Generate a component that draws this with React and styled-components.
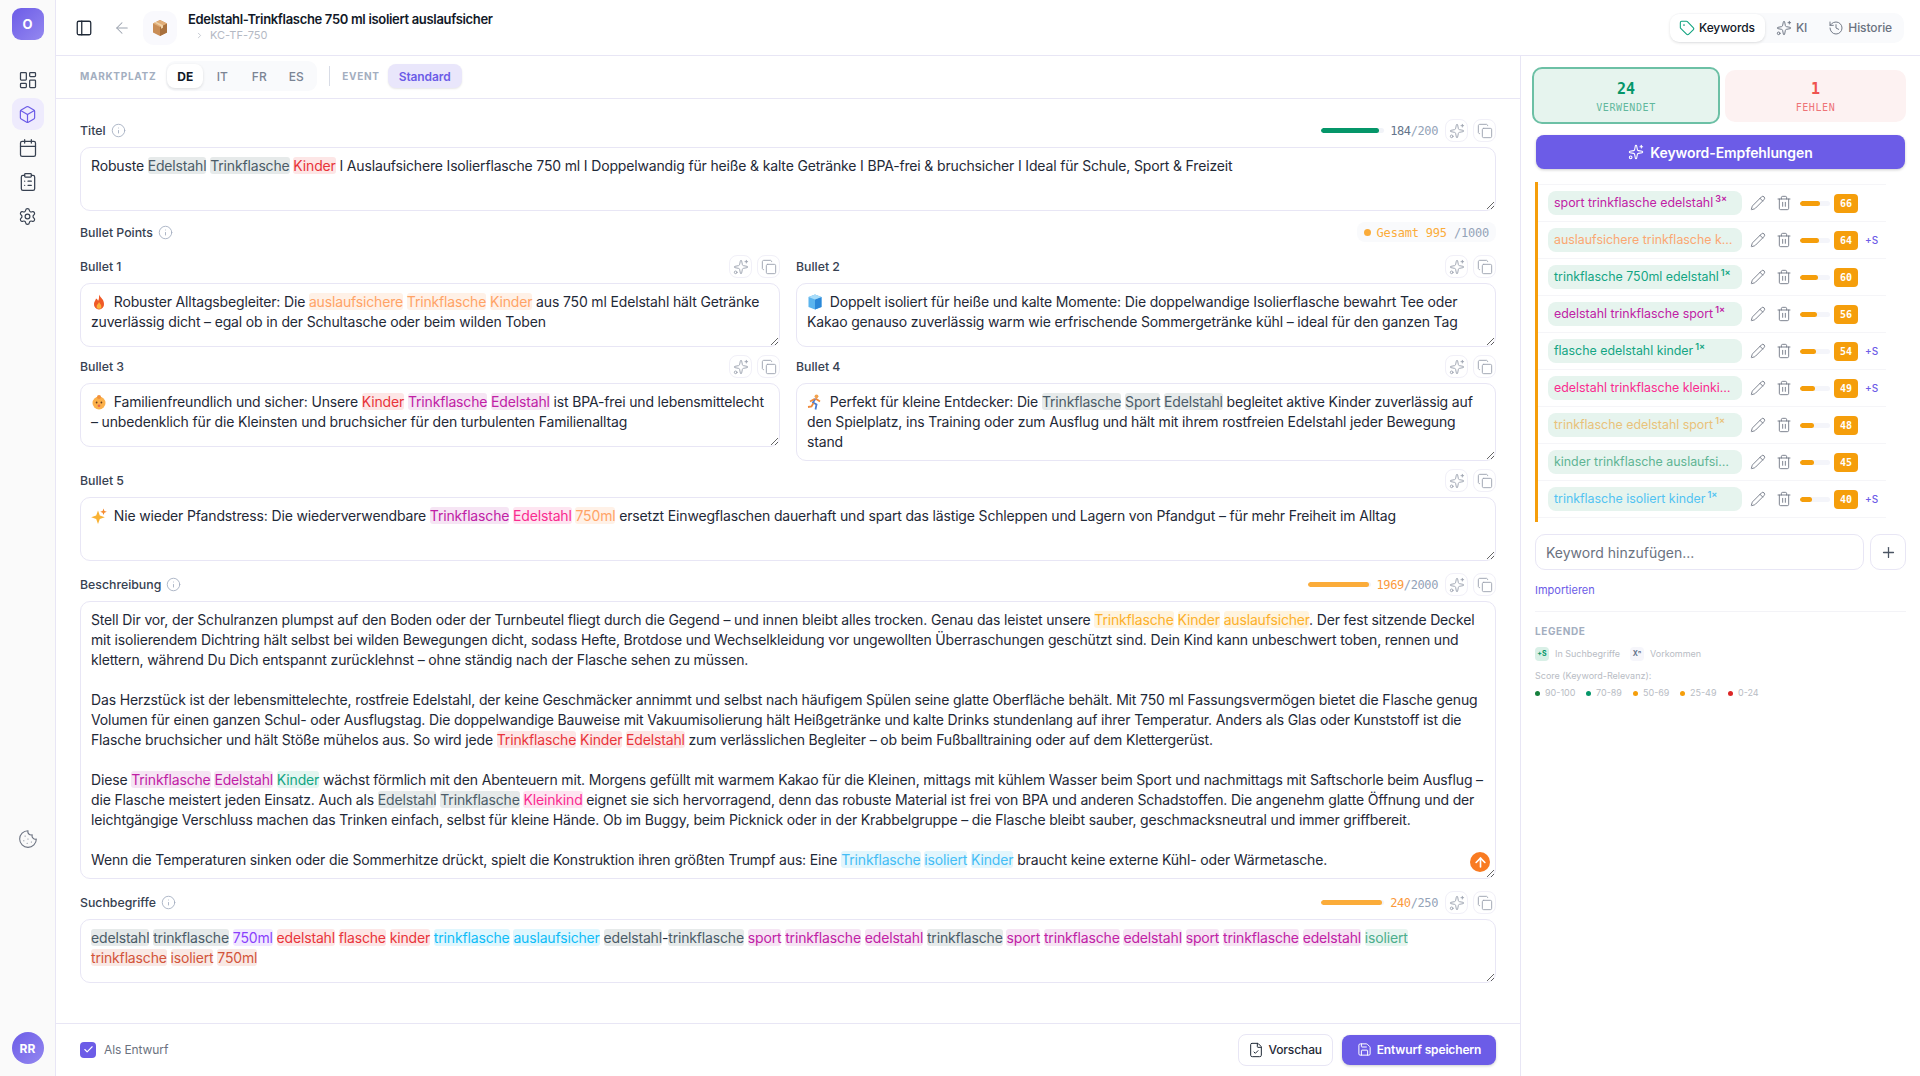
import React from 'react'
import styled, { createGlobalStyle } from 'styled-components'
import {
    ArrowLeft, ArrowUp, Box, Calendar, Check, ChevronRight, ClipboardList, Cookie, Copy, FileCheck,
    History, Info, LayoutDashboard, PanelLeft, Pencil, Plus, Save, Settings, Sparkles, Tag, Trash2,
} from 'lucide-react'

const MONO = '"DejaVu Sans Mono", "Liberation Mono", monospace'
const PURPLE = '#6c5ce7'
const LINE = '#e8e6f5'

const TONES = {
    gray: ['#4b5c68', '#e6eaea'],
    red: ['#e8343a', '#fde6e6'],
    orange: ['#ffa366', '#fff1e7'],
    magenta: ['#c021a5', '#f6e5f4'],
    teal: ['#13a583', '#e4f6f0'],
    pink: ['#f92b8f', '#fee5f1'],
    yellow: ['#fcb02a', '#fff4df'],
    blue: ['#45bdf5', '#e3f6fd'],
    cyan: ['#0fbcf7', '#e0f7fe'],
    purple: ['#8a3ffc', '#f1e9ff'],
    brick: ['#d2543a', '#f9e9e5'],
    sage: ['#4cae8c', '#e8f5f0'],
}

const GlobalStyle = createGlobalStyle`
    html, body {
        margin: 0;
        padding: 0;
        background: #fff;
        font-family: Inter, "Noto Sans", sans-serif;
        color: #1f2937;
    }
    * { box-sizing: border-box; }
`

const Shell = styled.div`
    display: flex;
    height: 100vh;
    overflow: hidden;
`

const Sidebar = styled.nav`
    width: 56px;
    flex: none;
    display: flex;
    flex-direction: column;
    align-items: center;
    padding: 8px 0 12px;
    background: #fafafa;
    border-right: 1px solid ${LINE};
`

const Logo = styled.div`
    width: 32px;
    height: 32px;
    margin-bottom: 24px;
    border-radius: 9px;
    display: flex;
    align-items: center;
    justify-content: center;
    background: linear-gradient(135deg, #6c5ce7, #9488f0);
    color: #fff;
    font-size: 13px;
    font-weight: 700;
`

const NavItem = styled.div`
    width: 32px;
    height: 32px;
    margin-bottom: 2px;
    border-radius: 9px;
    display: flex;
    align-items: center;
    justify-content: center;
    background: ${({ $active }) => ($active ? '#eeebfd' : 'transparent')};
    color: ${({ $active }) => ($active ? PURPLE : '#374151')};
`

const CookieSlot = styled.div`
    margin-top: auto;
    height: 20px;
    margin-bottom: 183px;
    color: #6b7280;
`

const Avatar = styled(Logo)`
    border-radius: 50%;
    margin: 0;
    font-size: 12px;
`

const Column = styled.div`
    flex: 1;
    min-width: 0;
    display: flex;
    flex-direction: column;
`

const Header = styled.header`
    height: 56px;
    flex: none;
    display: flex;
    align-items: center;
    padding: 0 16px 0 19px;
    border-bottom: 1px solid ${LINE};
`

const BackLink = styled.div`
    display: flex;
    margin: 0 12px 0 20px;
    color: #9ca3af;
`

const Thumb = styled.div`
    width: 34px;
    height: 34px;
    margin-right: 11px;
    border-radius: 11px;
    background: #f9f9fd;
    display: flex;
    align-items: center;
    justify-content: center;
`

const TitleBlock = styled.div`
    flex: 1;
    display: flex;
    flex-direction: column;
    gap: 1px;
    margin-top: -2px;
`

const PageTitle = styled.div`
    font-size: 13px;
    line-height: 16px;
    font-weight: 600;
    letter-spacing: -0.32px;
    color: #111827;
`

const Sku = styled.div`
    display: flex;
    align-items: center;
    gap: 6px;
    padding-left: 7px;
    font-size: 11px;
    line-height: 14px;
    color: #b4b9c4;
`

const ViewTabs = styled.div`
    display: flex;
    gap: 2px;
    padding: 1px 2px 1px 0;
    background: #f9fafc;
    border-radius: 10px;
`

const ViewTab = styled.div`
    height: 28px;
    padding: 0 10px 0 9px;
    display: flex;
    align-items: center;
    gap: 4px;
    border-radius: 9px;
    font-size: 12px;
    font-weight: 500;
    letter-spacing: -0.1px;
    background: ${({ $active }) => ($active ? '#fff' : 'transparent')};
    color: ${({ $active }) => ($active ? '#111827' : '#6b7280')};
    box-shadow: ${({ $active }) => ($active ? '0 1px 3px rgba(0,0,0,.12)' : 'none')};
`

const Body = styled.div`
    flex: 1;
    min-height: 0;
    display: flex;
`

const Main = styled.main`
    width: 1465px;
    flex: none;
    display: flex;
    flex-direction: column;
    border-right: 1px solid ${LINE};
`

const TabBar = styled.div`
    height: 43px;
    flex: none;
    display: flex;
    align-items: center;
    padding: 0 24px 2px;
    border-bottom: 1px solid ${LINE};
`

const BarLabel = styled.span`
    font-size: 10px;
    font-weight: 700;
    letter-spacing: 0.7px;
    color: #a3aec0;
`

const Segment = styled.div`
    display: flex;
    gap: 1px;
    margin-left: 10px;
    padding: 3px 3px 3px 1px;
    border-radius: 9px;
    background: #f9fafc;
`

const SegmentItem = styled.div`
    width: 36px;
    height: 24px;
    display: flex;
    align-items: center;
    justify-content: center;
    border-radius: 8px;
    font-size: 12px;
    font-weight: ${({ $active }) => ($active ? 700 : 500)};
    background: ${({ $active }) => ($active ? '#fff' : 'transparent')};
    color: ${({ $active }) => ($active ? '#111827' : '#7b8494')};
    box-shadow: ${({ $active }) => ($active ? '0 1px 3px rgba(0,0,0,.12)' : 'none')};
`

const BarDivider = styled.div`
    width: 1px;
    height: 20px;
    margin: 0 12px;
    background: #d8dce6;
`

const EventPill = styled.div`
    height: 24px;
    margin-left: 8px;
    padding: 0 11px;
    display: flex;
    align-items: center;
    border-radius: 8px;
    font-size: 12px;
    font-weight: 600;
    letter-spacing: -0.1px;
    background: #e9e6fb;
    color: ${PURPLE};
    box-shadow: 0 1px 2px rgba(0,0,0,.1);
`

const Scroll = styled.div`
    flex: 1;
    min-height: 0;
    padding: 20px 24px 0;
    overflow: hidden;
`

const Field = styled.section`
    margin-bottom: ${({ $gap }) => $gap ?? 12}px;
`

const FieldHead = styled.div`
    height: 23px;
    margin-bottom: 5px;
    display: flex;
    align-items: center;
    justify-content: space-between;
`

const Label = styled.div`
    display: flex;
    align-items: center;
    gap: 5px;
    font-size: 12.3px;
    font-weight: 500;
    color: #374151;
    svg { color: #a3aec0; }
`

const Tools = styled.div`
    display: flex;
    align-items: center;
    gap: 5px;
`

const ToolButton = styled.button`
    width: 23px;
    height: 23px;
    padding: 0;
    display: flex;
    align-items: center;
    justify-content: center;
    border: 1px solid #f1f0f8;
    border-radius: 8px;
    background: #fff;
    color: #9ca3af;
`

const Meter = styled.div`
    width: 63px;
    height: 5px;
    margin-right: 1px;
    border-radius: 3px;
    background: #f1f3f8;
    overflow: hidden;
`

const MeterFill = styled.div`
    height: 100%;
    width: ${({ $value }) => $value}%;
    border-radius: 3px;
    background: ${({ $color }) => $color};
`

const Count = styled.div`
    margin-right: 2px;
    font-family: ${MONO};
    font-size: 12px;
    letter-spacing: -0.4px;
    color: #94a3b8;
`

const CountValue = styled.span`
    color: ${({ $color }) => $color};
`

const TextBox = styled.div`
    position: relative;
    min-height: 64px;
    padding: 8px 10px;
    border: 1px solid ${LINE};
    border-radius: 10px;
    background: #fff;
    font-size: 14px;
    line-height: 20px;
    letter-spacing: -0.16px;
    color: #1f2937;
    white-space: pre-wrap;
    resize: vertical;
    overflow: hidden;
`

const Mark = styled.span`
    border-radius: 3px;
    color: ${({ $tone }) => TONES[$tone][0]};
    background: ${({ $tone }) => TONES[$tone][1]};
`

const EmojiSlot = styled.svg`
    display: inline-block;
    width: 16px;
    height: 16px;
    margin-right: 3px;
    vertical-align: -3px;
`

const SectionHead = styled.div`
    height: 20px;
    margin-bottom: 13px;
    display: flex;
    align-items: center;
    justify-content: space-between;
`

const TotalPill = styled.div`
    height: 20px;
    padding: 1px 7px 0;
    display: flex;
    align-items: center;
    gap: 6px;
    border-radius: 8px;
    background: #f9fafc;
    font-family: ${MONO};
    font-size: 12px;
    letter-spacing: -0.2px;
    color: #fbac3a;
    white-space: pre;
`

const TotalMax = styled.span`
    color: #94a3b8;
`

const Dot = styled.span`
    width: ${({ $size }) => $size || 5}px;
    height: ${({ $size }) => $size || 5}px;
    flex: none;
    border-radius: 50%;
    background: ${({ $color }) => $color};
`

const BulletGrid = styled.div`
    display: grid;
    grid-template-columns: 700px 700px;
    column-gap: 16px;
    row-gap: 8px;
    align-items: start;
    margin-bottom: 8px;
`

const ScrollTop = styled.div`
    position: absolute;
    right: 5px;
    bottom: 6px;
    width: 20px;
    height: 20px;
    border-radius: 50%;
    background: #f97b22;
    color: #fff;
    display: flex;
    align-items: center;
    justify-content: center;
`

const Footer = styled.footer`
    height: 53px;
    flex: none;
    display: flex;
    align-items: center;
    padding: 0 24px 1px;
    border-top: 1px solid ${LINE};
`

const DraftToggle = styled.label`
    display: flex;
    align-items: center;
    gap: 8px;
    font-size: 12px;
    letter-spacing: -0.1px;
    color: #6b7280;
`

const CheckMark = styled.span`
    width: 16px;
    height: 16px;
    border-radius: 4px;
    background: ${PURPLE};
    color: #fff;
    display: flex;
    align-items: center;
    justify-content: center;
`

const FooterActions = styled.div`
    margin-left: auto;
    display: flex;
    align-items: center;
    gap: 9px;
`

const GhostButton = styled.button`
    height: 32px;
    padding: 0 10px 0 9px;
    display: flex;
    align-items: center;
    gap: 4px;
    border: 1px solid ${LINE};
    border-radius: 8px;
    background: #fff;
    color: #1f2937;
    font: 500 12px Inter, sans-serif;
    letter-spacing: -0.1px;
`

const SaveButton = styled.button`
    height: 30px;
    width: 154px;
    display: flex;
    align-items: center;
    justify-content: center;
    gap: 5px;
    border: 0;
    border-radius: 8px;
    background: ${PURPLE};
    color: #fff;
    font: 600 12px Inter, sans-serif;
    letter-spacing: -0.15px;
    box-shadow: 0 1px 3px rgba(0,0,0,.2);
`

const Panel = styled.aside`
    flex: 1;
    min-width: 0;
    padding: 11px 14px 0;
`

const Stats = styled.div`
    display: grid;
    grid-template-columns: 188px 181px;
    column-gap: 5px;
    align-items: center;
    margin-left: -3px;
`

const Stat = styled.div`
    height: ${({ $active }) => ($active ? 57 : 52)}px;
    padding-top: 2px;
    border: ${({ $active }) => ($active ? '2px solid #6cc0a5' : '0')};
    border-radius: 10px;
    background: ${({ $bg }) => $bg};
    display: flex;
    flex-direction: column;
    align-items: center;
    justify-content: center;
    gap: 4px;
    font-family: ${MONO};
`

const StatValue = styled.div`
    font-size: 15px;
    line-height: 18px;
    font-weight: 700;
    color: ${({ $color }) => $color};
`

const StatLabel = styled.div`
    font-size: 10px;
    line-height: 12px;
    letter-spacing: 0.6px;
    color: ${({ $color }) => $color};
`

const PrimaryButton = styled.button`
    width: 369px;
    height: 34px;
    margin: 11px 0 13px 1px;
    display: flex;
    align-items: center;
    justify-content: center;
    gap: 6px;
    border: 0;
    border-radius: 8px;
    background: ${PURPLE};
    color: #fff;
    font: 600 14px Inter, sans-serif;
    letter-spacing: -0.1px;
    box-shadow: 0 1px 3px rgba(0,0,0,.2);
`

const KeywordList = styled.div`
    width: 351px;
    padding: 2px 0 4px;
    border-left: 3px solid #f59e0b;
`

const KeywordRow = styled.div`
    height: 37px;
    padding-left: 10px;
    display: flex;
    align-items: center;
    border-top: 1px solid #f5f5f8;
    color: #6b7280;
    &:last-child { height: 38px; border-bottom: 1px solid #f5f5f8; }
`

const Chip = styled.div`
    width: 194px;
    height: 24px;
    flex: none;
    padding: 0 8px 0 6px;
    border-radius: 8px;
    background: #e6f4ee;
    font-size: 12.4px;
    line-height: 24px;
    color: ${({ $tone }) => $tone};
    white-space: nowrap;
    overflow: hidden;
    text-overflow: ellipsis;
`

const Times = styled.sup`
    margin-left: 2px;
    font-size: 9px;
    line-height: 0;
    font-weight: 600;
`

const RowAction = styled.span`
    display: flex;
    margin-left: ${({ $gap }) => $gap}px;
`

const ScoreTrack = styled.div`
    width: 30px;
    height: 5px;
    margin-left: 8px;
    border-radius: 3px;
    background: #f4f5fa;
    overflow: hidden;
`

const ScoreFill = styled.div`
    height: 100%;
    width: ${({ $value }) => $value}%;
    border-radius: 3px;
    background: #f59e0b;
`

const ScoreBadge = styled.div`
    width: 24px;
    height: 19px;
    margin-left: 4px;
    border-radius: 4px;
    background: #f59e0b;
    color: #fff;
    display: flex;
    align-items: center;
    justify-content: center;
    font-family: ${MONO};
    font-size: 10px;
    font-weight: 700;
`

const SearchFlag = styled.span`
    margin-left: 7px;
    font-size: 10px;
    font-weight: 500;
    color: ${PURPLE};
`

const AddRow = styled.div`
    margin-top: 12px;
    display: flex;
    gap: 6px;
`

const AddInput = styled.div`
    flex: 1;
    height: 36px;
    padding: 0 10px;
    display: flex;
    align-items: center;
    border: 1px solid ${LINE};
    border-radius: 10px;
    font-size: 14px;
    color: #6b7280;
`

const AddButton = styled.div`
    width: 36px;
    height: 36px;
    display: flex;
    align-items: center;
    justify-content: center;
    border: 1px solid ${LINE};
    border-radius: 10px;
    color: #4b5563;
`

const ImportLink = styled.div`
    margin-top: 13px;
    font-size: 11px;
    line-height: 14px;
    color: ${PURPLE};
`

const Legend = styled.div`
    margin-top: 14px;
    padding-top: 13px;
    border-top: 1px solid #f3f3f7;
`

const LegendTitle = styled.div`
    font-size: 10px;
    line-height: 12px;
    font-weight: 700;
    letter-spacing: 0.6px;
    color: #a3aec0;
`

const LegendRow = styled.div`
    display: flex;
    align-items: center;
    margin-top: ${({ $top }) => $top}px;
    font-size: 9px;
    line-height: 12px;
    color: #b8bcc4;
`

const LegendBadge = styled.span`
    width: 14px;
    height: 14px;
    margin-right: 6px;
    border-radius: 4px;
    display: flex;
    align-items: center;
    justify-content: center;
    font-size: 7px;
    font-weight: 700;
    background: ${({ $bg }) => $bg};
    color: ${({ $color }) => $color};
`

const LegendEntry = styled.span`
    display: flex;
    align-items: center;
    gap: 5px;
    width: ${({ $width }) => $width}px;
`

const LegendItem = styled.span`
    display: flex;
    align-items: center;
    width: ${({ $width }) => $width}px;
`

const KEYWORDS = [
    { text: 'sport trinkflasche edelstahl', tone: '#c021a5', times: '3×', score: 66 },
    { text: 'auslaufsichere trinkflasche kinder', tone: '#fba772', score: 64, search: true },
    { text: 'trinkflasche 750ml edelstahl', tone: '#13a583', times: '1×', score: 60 },
    { text: 'edelstahl trinkflasche sport', tone: '#c021a5', times: '1×', score: 56 },
    { text: 'flasche edelstahl kinder', tone: '#13a583', times: '1×', score: 54, search: true },
    { text: 'edelstahl trinkflasche kleinkind', tone: '#f92b8f', score: 49, search: true },
    { text: 'trinkflasche edelstahl sport', tone: '#e9c27a', times: '1×', score: 48 },
    { text: 'kinder trinkflasche auslaufsicher', tone: '#5fb594', score: 45 },
    { text: 'trinkflasche isoliert kinder', tone: '#52c3f2', times: '1×', score: 40, search: true },
]

const SCORES = [
    ['#15803d', '90-100', 51],
    ['#059669', '70-89', 47],
    ['#f59e0b', '50-69', 47],
    ['#f59e0b', '25-49', 48],
    ['#dc2626', '0-24', 40],
]

const ParcelEmoji = () => (
    <svg width="20" height="20" viewBox="0 0 20 20">
        <path d="M10 2l7 3.5v9L10 18l-7-3.500v-9z" fill="#c98d55" />
        <path d="M10 9l7-3.500v9L10 18z" fill="#a8703d" />
        <path d="M10 2l7 3.500L10 9 3 5.500z" fill="#e0ad78" />
        <path d="M6 3.800l7 3.500v2.500l-2 1V8.200L4.500 4.600z" fill="#f0d3a8" />
    </svg>
)

const FireEmoji = () => (
    <EmojiSlot viewBox="0 0 16 16">
        <path d="M8 .5c1 3 5 4.500 5 9.500A5 5 0 0 1 8 15.500 5 5 0 0 1 3 10C3 7.500 4.500 7 5 4.500 6 5 7 6 7 7c1-1.500 1.200-4 1-6.500z" fill="#ef5a28" />
        <path d="M8 8c.5 1.500 2.300 2.300 2.300 4.200A2.300 2.300 0 0 1 8 14.800a2.300 2.300 0 0 1-2.300-2.600C5.700 10.500 7.500 10 8 8z" fill="#fbb13c" />
    </EmojiSlot>
)

const CubeEmoji = () => (
    <EmojiSlot viewBox="0 0 16 16">
        <path d="M8 .5l6.500 2.500v10L8 15.500 1.500 13V3z" fill="#5bb4ee" />
        <path d="M8 5.500L14.500 3v10L8 15.500z" fill="#2b87d8" />
        <path d="M8 .5L14.500 3 8 5.500 1.500 3z" fill="#a8dcf9" />
    </EmojiSlot>
)

const BabyEmoji = () => (
    <EmojiSlot viewBox="0 0 16 16">
        <circle cx="8" cy="9" r="6.500" fill="#fbb04a" />
        <circle cx="8" cy="3" r="2" fill="#f2913a" />
        <circle cx="5.600" cy="8.500" r=".9" fill="#6b3d1a" />
        <circle cx="10.400" cy="8.500" r=".9" fill="#6b3d1a" />
        <circle cx="8" cy="11.800" r="1.300" fill="#e8674a" />
    </EmojiSlot>
)

const RunnerEmoji = () => (
    <EmojiSlot viewBox="0 0 16 16">
        <circle cx="9.500" cy="2.300" r="1.900" fill="#f2a24e" />
        <path d="M8.500 4.500l-2.500 4 3.500 2-1 5" stroke="#4a7bd0" strokeWidth="1.800" fill="none" />
        <path d="M8.500 4.500L13 7.500M7.500 5L3 7.500M6.500 9l-2 3.500-3.500.5" stroke="#f08a3c" strokeWidth="1.800" fill="none" />
    </EmojiSlot>
)

const SparkleEmoji = () => (
    <EmojiSlot viewBox="0 0 16 16">
        <path d="M7 2.500l1.800 5 5 1.800-5 1.800L7 16l-1.800-4.900-5-1.800 5-1.800z" fill="#f9b233" />
        <path d="M12.500 .5l.9 2.400 2.400.9-2.400.9-.9 2.400-.9-2.400-2.400-.9 2.400-.9z" fill="#f58a2e" />
    </EmojiSlot>
)

const FieldTools = () => (
    <Tools>
        <ToolButton><Sparkles size={16} strokeWidth={1.4} /></ToolButton>
        <ToolButton><Copy size={16} strokeWidth={1.4} /></ToolButton>
    </Tools>
)

const CountedTools = ({ value, max, fill, color, valueColor }) => (
    <Tools>
        <Meter><MeterFill $value={fill} $color={color} /></Meter>
        <Count><CountValue $color={valueColor}>{value}</CountValue>/{max}</Count>
        <ToolButton><Sparkles size={16} strokeWidth={1.4} /></ToolButton>
        <ToolButton><Copy size={16} strokeWidth={1.4} /></ToolButton>
    </Tools>
)

const FieldLabel = ({ children }) => (
    <Label>{children}<Info size={15} strokeWidth={1.4} /></Label>
)

const App = () => {
    return (
        <Shell>
            <GlobalStyle />
            <Sidebar>
                <Logo>O</Logo>
                <NavItem><LayoutDashboard size={20} strokeWidth={1.5} /></NavItem>
                <NavItem $active><Box size={19} strokeWidth={1.5} /></NavItem>
                <NavItem><Calendar size={20} strokeWidth={1.5} /></NavItem>
                <NavItem><ClipboardList size={20} strokeWidth={1.5} /></NavItem>
                <NavItem><Settings size={19} strokeWidth={1.5} /></NavItem>
                <CookieSlot><Cookie size={20} strokeWidth={1.3} /></CookieSlot>
                <Avatar>RR</Avatar>
            </Sidebar>
            <Column>
                <Header>
                    <PanelLeft size={18} strokeWidth={1.7} />
                    <BackLink><ArrowLeft size={18} strokeWidth={1.4} /></BackLink>
                    <Thumb><ParcelEmoji /></Thumb>
                    <TitleBlock>
                        <PageTitle>Edelstahl-Trinkflasche 750 ml isoliert auslaufsicher</PageTitle>
                        <Sku><ChevronRight size={9} />KC-TF-750</Sku>
                    </TitleBlock>
                    <ViewTabs>
                        <ViewTab $active><Tag size={16} strokeWidth={1.6} color="#10a37f" />Keywords</ViewTab>
                        <ViewTab><Sparkles size={16} strokeWidth={1.4} />KI</ViewTab>
                        <ViewTab><History size={16} strokeWidth={1.4} />Historie</ViewTab>
                    </ViewTabs>
                </Header>
                <Body>
                    <Main>
                        <TabBar>
                            <BarLabel>MARKTPLATZ</BarLabel>
                            <Segment>
                                <SegmentItem $active>DE</SegmentItem>
                                <SegmentItem>IT</SegmentItem>
                                <SegmentItem>FR</SegmentItem>
                                <SegmentItem>ES</SegmentItem>
                            </Segment>
                            <BarDivider />
                            <BarLabel>EVENT</BarLabel>
                            <EventPill>Standard</EventPill>
                        </TabBar>
                        <Scroll>
                            <Field $gap={11}>
                                <FieldHead>
                                    <FieldLabel>Titel</FieldLabel>
                                    <CountedTools value="184" max="200" fill={91} color="#059669" valueColor="#64748b" />
                                </FieldHead>
                                <TextBox>Robuste <Mark $tone="gray">Edelstahl</Mark> <Mark $tone="gray">Trinkflasche</Mark> <Mark $tone="red">Kinder</Mark> I Auslaufsichere Isolierflasche 750 ml I Doppelwandig für heiße &amp; kalte Getränke I BPA-frei &amp; bruchsicher I Ideal für Schule, Sport &amp; Freizeit</TextBox>
                            </Field>

                            <SectionHead>
                                <FieldLabel>Bullet Points</FieldLabel>
                                <TotalPill>
                                    <Dot $size={7} $color="#fbac3a" />
                                    <span>Gesamt 995 <TotalMax>/1000</TotalMax></span>
                                </TotalPill>
                            </SectionHead>

                            <BulletGrid>
                                <div>
                                    <FieldHead><Label>Bullet 1</Label><FieldTools /></FieldHead>
                                    <TextBox><FireEmoji /> Robuster Alltagsbegleiter: Die <Mark $tone="orange">auslaufsichere</Mark> <Mark $tone="orange">Trinkflasche</Mark> <Mark $tone="orange">Kinder</Mark> aus 750 ml Edelstahl hält Getränke zuverlässig dicht – egal ob in der Schultasche oder beim wilden Toben</TextBox>
                                </div>
                                <div>
                                    <FieldHead><Label>Bullet 2</Label><FieldTools /></FieldHead>
                                    <TextBox><CubeEmoji /> Doppelt isoliert für heiße und kalte Momente: Die doppelwandige Isolierflasche bewahrt Tee oder Kakao genauso zuverlässig warm wie erfrischende Sommergetränke kühl – ideal für den ganzen Tag</TextBox>
                                </div>
                                <div>
                                    <FieldHead><Label>Bullet 3</Label><FieldTools /></FieldHead>
                                    <TextBox><BabyEmoji /> Familienfreundlich und sicher: Unsere <Mark $tone="red">Kinder</Mark> <Mark $tone="magenta">Trinkflasche</Mark> <Mark $tone="magenta">Edelstahl</Mark> ist BPA-frei und lebensmittelecht – unbedenklich für die Kleinsten und bruchsicher für den turbulenten Familienalltag</TextBox>
                                </div>
                                <div>
                                    <FieldHead><Label>Bullet 4</Label><FieldTools /></FieldHead>
                                    <TextBox><RunnerEmoji /> Perfekt für kleine Entdecker: Die <Mark $tone="gray">Trinkflasche</Mark> <Mark $tone="gray">Sport</Mark> <Mark $tone="gray">Edelstahl</Mark> begleitet aktive Kinder zuverlässig auf den Spielplatz, ins Training oder zum Ausflug und hält mit ihrem rostfreien Edelstahl jeder Bewegung stand</TextBox>
                                </div>
                            </BulletGrid>

                            <Field>
                                <FieldHead><Label>Bullet 5</Label><FieldTools /></FieldHead>
                                <TextBox><SparkleEmoji /> Nie wieder Pfandstress: Die wiederverwendbare <Mark $tone="magenta">Trinkflasche</Mark> <Mark $tone="pink">Edelstahl</Mark> <Mark $tone="orange">750ml</Mark> ersetzt Einwegflaschen dauerhaft und spart das lästige Schleppen und Lagern von Pfandgut – für mehr Freiheit im Alltag</TextBox>
                            </Field>

                            <Field>
                                <FieldHead>
                                    <FieldLabel>Beschreibung</FieldLabel>
                                    <CountedTools value="1969" max="2000" fill={98} color="#fbac3a" valueColor="#fb9a3c" />
                                </FieldHead>
                                <TextBox>
                                    Stell Dir vor, der Schulranzen plumpst auf den Boden oder der Turnbeutel fliegt durch die Gegend – und innen bleibt alles trocken. Genau das leistet unsere <Mark $tone="yellow">Trinkflasche</Mark> <Mark $tone="yellow">Kinder</Mark> <Mark $tone="yellow">auslaufsicher</Mark>. Der fest sitzende Deckel mit isolierendem Dichtring hält selbst bei wilden Bewegungen dicht, sodass Hefte, Brotdose und Wechselkleidung vor ungewollten Überraschungen geschützt sind. Dein Kind kann unbeschwert toben, rennen und klettern, während Du Dich entspannt zurücklehnst – ohne ständig nach der Flasche sehen zu müssen.
                                    {'\n\n'}
                                    Das Herzstück ist der lebensmittelechte, rostfreie Edelstahl, der keine Geschmäcker annimmt und selbst nach häufigem Spülen seine glatte Oberfläche behält. Mit 750 ml Fassungsvermögen bietet die Flasche genug Volumen für einen ganzen Schul- oder Ausflugstag. Die doppelwandige Bauweise mit Vakuumisolierung hält Heißgetränke und kalte Drinks stundenlang auf ihrer Temperatur. Anders als Glas oder Kunststoff ist die Flasche bruchsicher und hält Stöße mühelos aus. So wird jede <Mark $tone="red">Trinkflasche</Mark> <Mark $tone="red">Kinder</Mark> <Mark $tone="red">Edelstahl</Mark> zum verlässlichen Begleiter – ob beim Fußballtraining oder auf dem Klettergerüst.
                                    {'\n\n'}
                                    Diese <Mark $tone="magenta">Trinkflasche</Mark> <Mark $tone="magenta">Edelstahl</Mark> <Mark $tone="teal">Kinder</Mark> wächst förmlich mit den Abenteuern mit. Morgens gefüllt mit warmem Kakao für die Kleinen, mittags mit kühlem Wasser beim Sport und nachmittags mit Saftschorle beim Ausflug – die Flasche meistert jeden Einsatz. Auch als <Mark $tone="gray">Edelstahl</Mark> <Mark $tone="gray">Trinkflasche</Mark> <Mark $tone="pink">Kleinkind</Mark> eignet sie sich hervorragend, denn das robuste Material ist frei von BPA und anderen Schadstoffen. Die angenehm glatte Öffnung und der leichtgängige Verschluss machen das Trinken einfach, selbst für kleine Hände. Ob im Buggy, beim Picknick oder in der Krabbelgruppe – die Flasche bleibt sauber, geschmacksneutral und immer griffbereit.
                                    {'\n\n'}
                                    Wenn die Temperaturen sinken oder die Sommerhitze drückt, spielt die Konstruktion ihren größten Trumpf aus: Eine <Mark $tone="blue">Trinkflasche</Mark> <Mark $tone="blue">isoliert</Mark> <Mark $tone="blue">Kinder</Mark> braucht keine externe Kühl- oder Wärmetasche.
                                    <ScrollTop><ArrowUp size={15} strokeWidth={2.6} /></ScrollTop>
                                </TextBox>
                            </Field>

                            <Field>
                                <FieldHead>
                                    <FieldLabel>Suchbegriffe</FieldLabel>
                                    <CountedTools value="240" max="250" fill={96} color="#fbac3a" valueColor="#fb9a3c" />
                                </FieldHead>
                                <TextBox>
                                    <Mark $tone="gray">edelstahl</Mark> <Mark $tone="gray">trinkflasche</Mark> <Mark $tone="purple">750ml</Mark> <Mark $tone="red">edelstahl</Mark> <Mark $tone="red">flasche</Mark> <Mark $tone="red">kinder</Mark> <Mark $tone="cyan">trinkflasche</Mark> <Mark $tone="cyan">auslaufsicher</Mark> <Mark $tone="gray">edelstahl</Mark>-<Mark $tone="gray">trinkflasche</Mark> <Mark $tone="magenta">sport</Mark> <Mark $tone="magenta">trinkflasche</Mark> <Mark $tone="magenta">edelstahl</Mark> <Mark $tone="gray">trinkflasche</Mark> <Mark $tone="magenta">sport</Mark> <Mark $tone="magenta">trinkflasche</Mark> <Mark $tone="magenta">edelstahl</Mark> <Mark $tone="magenta">sport</Mark> <Mark $tone="magenta">trinkflasche</Mark> <Mark $tone="magenta">edelstahl</Mark> <Mark $tone="sage">isoliert</Mark>{'\n'}<Mark $tone="brick">trinkflasche</Mark> <Mark $tone="brick">isoliert</Mark> <Mark $tone="brick">750ml</Mark>
                                </TextBox>
                            </Field>
                        </Scroll>
                        <Footer>
                            <DraftToggle>
                                <CheckMark><Check size={11} strokeWidth={2.4} /></CheckMark>
                                Als Entwurf
                            </DraftToggle>
                            <FooterActions>
                                <GhostButton><FileCheck size={16} strokeWidth={1.5} />Vorschau</GhostButton>
                                <SaveButton><Save size={15} strokeWidth={1.6} />Entwurf speichern</SaveButton>
                            </FooterActions>
                        </Footer>
                    </Main>
                    <Panel>
                        <Stats>
                            <Stat $active $bg="#e6f4ee">
                                <StatValue $color="#059669">24</StatValue>
                                <StatLabel $color="#62b89d">VERWENDET</StatLabel>
                            </Stat>
                            <Stat $bg="#fdf2f2">
                                <StatValue $color="#ef5350">1</StatValue>
                                <StatLabel $color="#ee7478">FEHLEN</StatLabel>
                            </Stat>
                        </Stats>
                        <PrimaryButton><Sparkles size={16} strokeWidth={1.6} />Keyword-Empfehlungen</PrimaryButton>
                        <KeywordList>
                            {KEYWORDS.map((keyword) => (
                                <KeywordRow key={keyword.text}>
                                    <Chip $tone={keyword.tone}>
                                        {keyword.text}
                                        {keyword.times && <Times>{keyword.times}</Times>}
                                    </Chip>
                                    <RowAction $gap={8}><Pencil size={16} strokeWidth={1.3} /></RowAction>
                                    <RowAction $gap={10}><Trash2 size={16} strokeWidth={1.3} /></RowAction>
                                    <ScoreTrack><ScoreFill $value={keyword.score} /></ScoreTrack>
                                    <ScoreBadge>{keyword.score}</ScoreBadge>
                                    {keyword.search && <SearchFlag>+S</SearchFlag>}
                                </KeywordRow>
                            ))}
                        </KeywordList>
                        <AddRow>
                            <AddInput>Keyword hinzufügen...</AddInput>
                            <AddButton><Plus size={17} strokeWidth={1.8} /></AddButton>
                        </AddRow>
                        <ImportLink>Importieren</ImportLink>
                        <Legend>
                            <LegendTitle>LEGENDE</LegendTitle>
                            <LegendRow $top={10}>
                                <LegendItem $width={95}>
                                    <LegendBadge $bg="#d9f0e7" $color="#059669">+S</LegendBadge>
                                    In Suchbegriffe
                                </LegendItem>
                                <LegendItem>
                                    <LegendBadge $bg="#f6f6fb" $color="#64748b">Xⁿ</LegendBadge>
                                    Vorkommen
                                </LegendItem>
                            </LegendRow>
                            <LegendRow $top={9}>Score (Keyword-Relevanz):</LegendRow>
                            <LegendRow $top={5}>
                                {SCORES.map(([color, range, width]) => (
                                    <LegendEntry key={range} $width={width}>
                                        <Dot $color={color} />{range}
                                    </LegendEntry>
                                ))}
                            </LegendRow>
                        </Legend>
                    </Panel>
                </Body>
            </Column>
        </Shell>
    )
}

export default App
